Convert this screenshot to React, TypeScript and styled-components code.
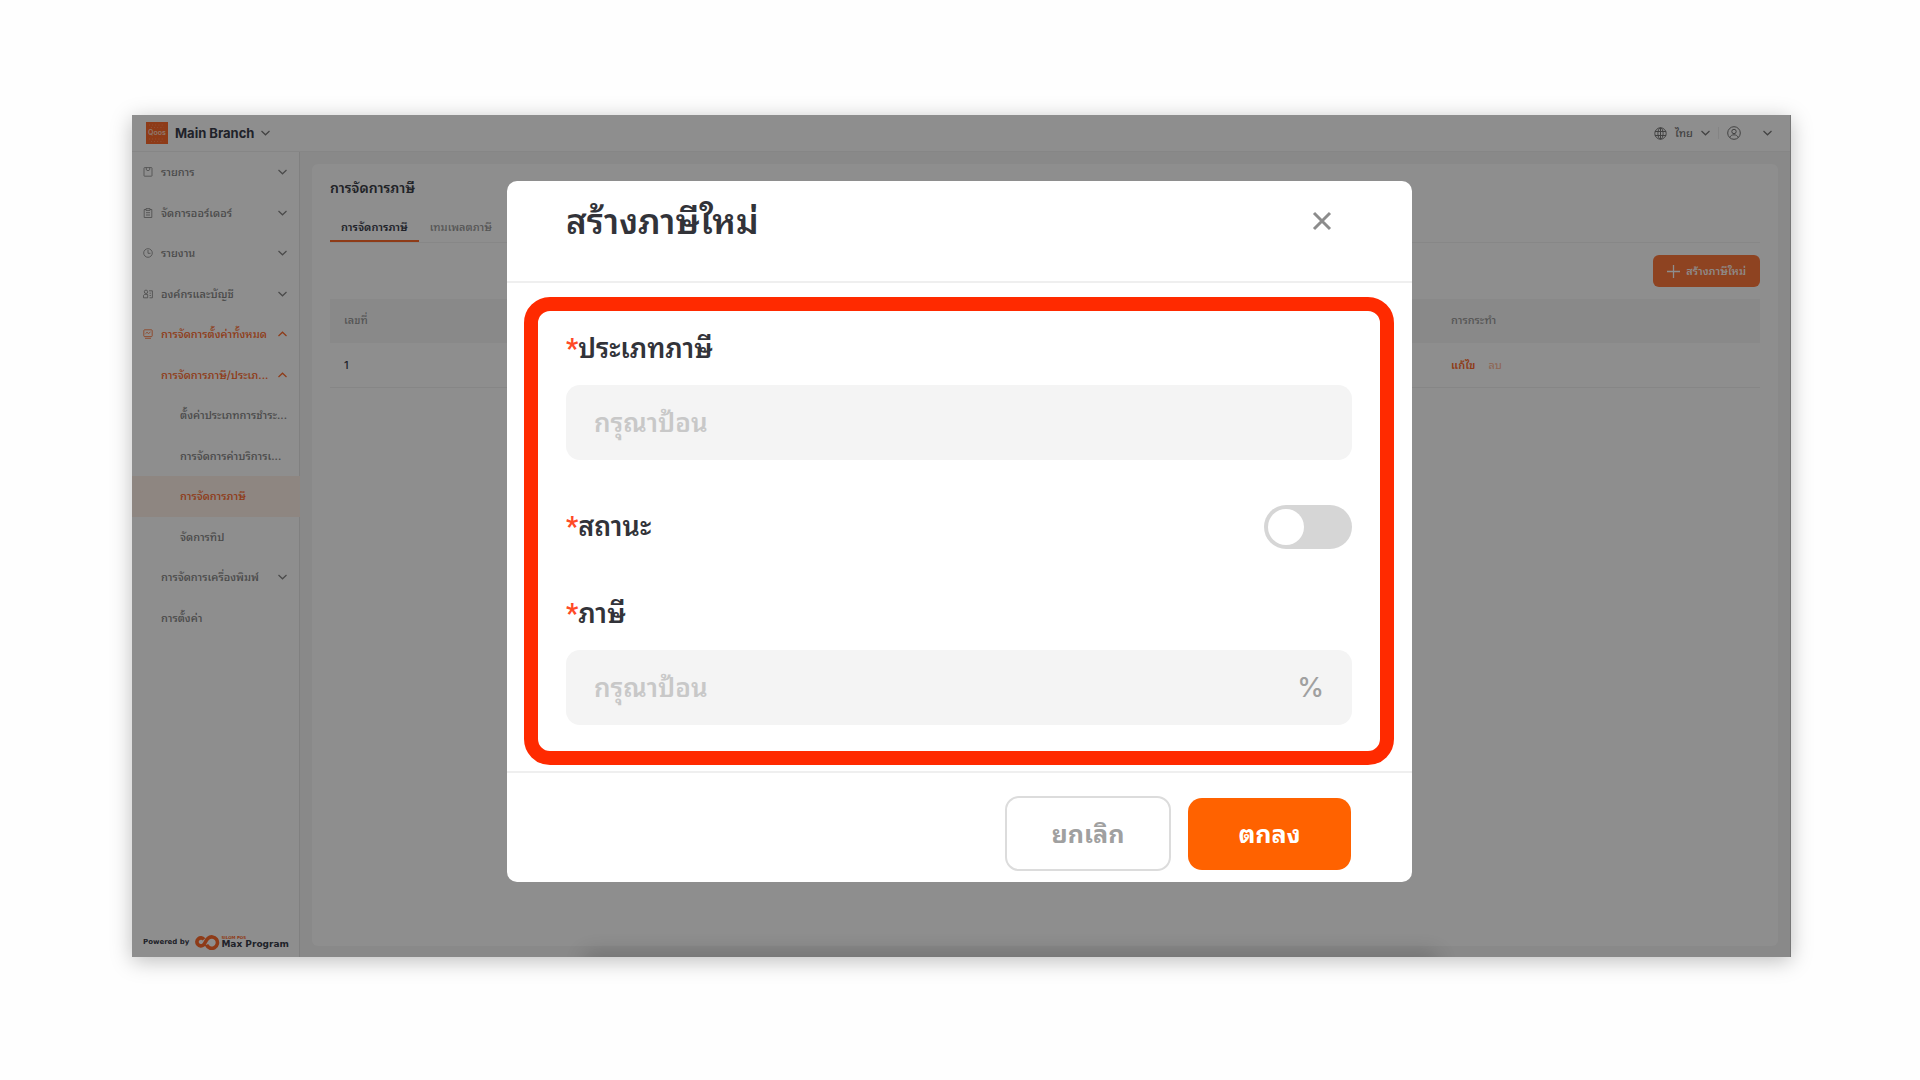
import React from "react";
import styled, { createGlobalStyle } from "styled-components";

const Global = createGlobalStyle`
  * { box-sizing: border-box; }
  body { margin: 0; background: #fefefe; font-family: Inter, "Noto Sans Thai Looped", Loma, Waree, Garuda, "Noto Sans Thai", "Noto Sans", sans-serif; color: #3a3d46; }
  button, input { font: inherit; color: inherit; }
  ul { list-style: none; margin: 0; padding: 0; }
  h1, h2 { margin: 0; }
`;

const Stage = styled.div`
  min-height: 100vh;
  display: grid;
  padding: 115px 129px 123px 132px;
`;
const Screen = styled.div`
  position: relative;
  display: flex;
  flex-direction: column;
  background: #f6f6f6;
  border-right: 1px solid #777;
  box-shadow: 0 4px 20px rgba(0, 0, 0, 0.26);
`;
const TopBar = styled.header`
  display: flex;
  align-items: center;
  justify-content: space-between;
  height: 37px;
  padding: 0 18px 0 14px;
  background: #fff;
  border-bottom: 1px solid #f0f0f0;
`;
const PlainButton = styled.button<{ $gap?: number }>`
  display: flex;
  align-items: center;
  gap: ${p => p.$gap ?? 8}px;
  padding: 0;
  border: 0;
  background: none;
  font-size: 11px;
  line-height: 16px;
  font-weight: 500;
  color: #777;
`;
const Branch = styled(PlainButton)`
  font-size: 13px;
  font-weight: 700;
  color: #3a3d4b;
  svg:last-child { color: #777; }
`;
const Account = styled.div`
  display: flex;
  align-items: center;
  gap: 8px;
`;
const Divider = styled.span`
  width: 1px;
  height: 12px;
  background: #eee;
`;
const Columns = styled.div`
  flex: 1;
  display: flex;
`;
const Sidebar = styled.nav`
  flex: none;
  width: 168px;
  display: flex;
  flex-direction: column;
  justify-content: space-between;
  background: #fff;
  border-right: 1px solid #e6e6e6;
`;
const Menu = styled.ul`
  display: grid;
  height: 486px;
  grid-auto-rows: 1fr;
`;
const MenuLink = styled.a<{ $level: number; $on?: boolean; $selected?: boolean }>`
  display: flex;
  align-items: center;
  height: 100%;
  padding: 0 13px 0 ${p => [11, 29, 48][p.$level]}px;
  font-size: 11px;
  line-height: 16px;
  font-weight: 500;
  color: ${p => (p.$on ? "#ff6b2c" : "#858585")};
  background: ${p => (p.$selected ? "#fff0e8" : "none")};
  text-decoration: none;
  white-space: nowrap;
  svg { flex: none; }
`;
const MenuIcon = styled.span`
  display: flex;
  width: 18px;
`;
const MenuText = styled.span`
  flex: 1;
  min-width: 0;
`;
const Powered = styled.footer`
  display: flex;
  align-items: center;
  gap: 5px;
  padding: 0 11px 7px;
  font-family: "DejaVu Sans", sans-serif;
  font-size: 7px;
  font-weight: 700;
  color: #3a3d4b;
  white-space: nowrap;
`;
const Brand = styled.span`
  display: flex;
  align-items: center;
`;
const BrandName = styled.span`
  display: flex;
  flex-direction: column;
  font-size: 9px;
  line-height: 9px;
  small { font-size: 4px; line-height: 4px; color: #ff6b2c; }
`;
const Card = styled.main`
  flex: 1;
  margin: 12px 12px 11px 12px;
  padding: 15px 18px;
  background: #fff;
  border-radius: 6px;
`;
const PageTitle = styled.h1`
  font-size: 14px;
  line-height: 18px;
  font-weight: 600;
`;
const Tabs = styled.div`
  display: flex;
  margin-top: 12px;
  border-bottom: 1px solid #f3f3f3;
`;
const Tab = styled.button<{ $on?: boolean }>`
  height: 33px;
  padding: 3px 11px 0;
  border: 0;
  border-bottom: 2px solid ${p => (p.$on ? "#ff6b2c" : "transparent")};
  background: none;
  font-size: 11px;
  font-weight: ${p => (p.$on ? 600 : 500)};
  color: ${p => (p.$on ? "#3a3d4b" : "#999")};
`;
const Actions = styled.div`
  display: flex;
  justify-content: flex-end;
  padding: 12px 0;
`;
const AddButton = styled.button`
  display: flex;
  align-items: center;
  gap: 6px;
  height: 32px;
  padding: 0 14px;
  border: 0;
  border-radius: 6px;
  background: #ff783c;
  color: #fff;
  font-size: 11px;
  line-height: 16px;
  font-weight: 500;
`;
const Table = styled.table`
  width: 100%;
  border-collapse: collapse;
  table-layout: fixed;
  font-size: 11px;
  line-height: 16px;
  th, td { height: 44px; padding: 0 14px; text-align: left; font-weight: 500; }
  th { padding-bottom: 2px; background: #f6f6f6; color: #999; }
  td { border-bottom: 1px solid #f0f0f0; color: #3a3d4b; }
  th:first-child { width: 1107px; }
`;
const RowLink = styled.a<{ $faded?: boolean }>`
  margin-right: 13px;
  color: ${p => (p.$faded ? "#ffb594" : "#ff6b2c")};
  font-weight: ${p => (p.$faded ? 400 : 600)};
  text-decoration: none;
`;
const Overlay = styled.div`
  position: absolute;
  inset: 0;
  display: flex;
  align-items: flex-start;
  justify-content: center;
  padding-top: 66px;
  overflow: hidden;
  background: rgba(0, 0, 0, 0.443);
  &::after {
    content: "";
    position: absolute;
    left: 455px;
    right: 355px;
    bottom: -10px;
    height: 10px;
    border-radius: 10px;
    box-shadow: 0 0 20px 4px rgba(0, 0, 0, 0.2);
  }
`;
const Dialog = styled.section`
  width: 905px;
  margin-right: 3px;
  background: #fff;
  border-radius: 10px;
  color: #323339;
`;
const DialogHead = styled.header`
  display: flex;
  align-items: flex-start;
  justify-content: space-between;
  height: 102px;
  padding: 16px 80px 0 59px;
  border-bottom: 2px solid #efefef;
  h2 { font-size: 35px; line-height: 48px; font-weight: 600; }
`;
const CloseButton = styled.button`
  display: flex;
  margin-top: 14px;
  padding: 0;
  border: 0;
  background: none;
  color: #8c8c8c;
`;
const Form = styled.form`
  margin: 14px 18px 6px 17px;
  padding: 18px 28px 26px;
  border: 14px solid #ff2a00;
  border-radius: 26px;
`;
const Label = styled.label`
  display: block;
  font-size: 27px;
  line-height: 40px;
  font-weight: 600;
`;
const Star = styled.span`
  font-family: Roboto, sans-serif;
  font-weight: 700;
  color: #ff4a26;
`;
const Field = styled.div`
  display: flex;
  align-items: center;
  height: 75px;
  margin-top: 16px;
  padding: 0 28px;
  border-radius: 14px;
  background: #f4f4f4;
  color: #a0a0a0;
  font-size: 27px;
  font-weight: 500;
`;
const TextInput = styled.input`
  flex: 1;
  min-width: 0;
  height: 60px;
  padding: 0;
  border: 0;
  outline: 0;
  background: none;
  font-size: 26px;
  font-weight: 600;
  &::placeholder { color: #c8c8c8; opacity: 1; }
`;
const SwitchRow = styled.div`
  display: flex;
  align-items: center;
  justify-content: space-between;
  margin: 45px 0;
`;
const Switch = styled.input`
  appearance: none;
  display: flex;
  align-items: center;
  width: 88px;
  height: 44px;
  margin: 0;
  padding: 0 4px;
  border-radius: 22px;
  background: #d6d6d6;
  &::before { content: ""; width: 36px; height: 36px; border-radius: 50%; background: #fff; }
  &:checked { justify-content: flex-end; background: #ff6200; }
`;
const DialogFoot = styled.footer`
  display: flex;
  align-items: center;
  justify-content: flex-end;
  gap: 17px;
  padding: 23px 61px 11px;
  border-top: 2px solid #efefef;
`;
const FootButton = styled.button<{ $primary?: boolean }>`
  width: ${p => (p.$primary ? 163 : 166)}px;
  height: ${p => (p.$primary ? 72 : 75)}px;
  padding: 0;
  border: ${p => (p.$primary ? "0" : "2px solid #dcdcdc")};
  border-radius: 14px;
  background: ${p => (p.$primary ? "#ff6200" : "#fff")};
  color: ${p => (p.$primary ? "#fff" : "#a0a0a0")};
  font-size: 25px;
  line-height: 36px;
  font-weight: 700;
`;

const Chevron = ({ up }: { up?: boolean }) => (
  <svg width="9" height="6" viewBox="0 0 9 6" fill="none" stroke="currentColor" strokeWidth="1.2">
    <path d={up ? "M.5 5 4.500 1.200 8.500 5" : "M.5 1 4.500 4.800 8.500 1"} />
  </svg>
);

const iconPaths: Record<string, React.ReactNode> = {
  box: <><rect x="1" y=".6" width="8" height="8.600" rx=".6" /><path d="M3.300 .6v2.200l1.700 1 1.700-1V.6" /></>,
  order: <><path d="M3 1.500H1.200v8h7.600v-8H7M3 .6h4v1.800H3zM3 4.700h4M3 7h4" /></>,
  clock: <><circle cx="5" cy="5" r="4.300" /><path d="M5 2v3.300h2.500" /></>,
  org: <><circle cx="3" cy="2.800" r="1.700" /><path d="M.5 8.800V7c0-1 .8-1.600 1.600-1.600h2.600v3.400zM6 1.800h3.400v7H6.500M6.500 4.200h1.400M6.500 6.500h1.400" /></>,
  board: <><rect x=".8" y=".8" width="8.400" height="6.800" rx=".8" /><path d="M2.500 4.700 4 3.300l1.500 1.200 2-1.500M2 9.300h6" /></>,
};
const Icon = ({ name }: { name: string }) => (
  <svg width="10" height="10" viewBox="0 0 10 10" fill="none" stroke="currentColor" strokeWidth=".8">
    {iconPaths[name]}
  </svg>
);

type Item = { text: string; level: number; icon?: string; on?: boolean; selected?: boolean; arrow?: "up" | "down" };
const items: Item[] = [
  { text: "รายการ", level: 0, icon: "box", arrow: "down" },
  { text: "จัดการออร์เดอร์", level: 0, icon: "order", arrow: "down" },
  { text: "รายงาน", level: 0, icon: "clock", arrow: "down" },
  { text: "องค์กรและบัญชี", level: 0, icon: "org", arrow: "down" },
  { text: "การจัดการตั้งค่าทั้งหมด", level: 0, icon: "board", on: true, arrow: "up" },
  { text: "การจัดการภาษี/ประเภ...", level: 1, on: true, arrow: "up" },
  { text: "ตั้งค่าประเภทการชำระ...", level: 2 },
  { text: "การจัดการค่าบริการเ...", level: 2 },
  { text: "การจัดการภาษี", level: 2, on: true, selected: true },
  { text: "จัดการทิป", level: 2 },
  { text: "การจัดการเครื่องพิมพ์", level: 1, arrow: "down" },
  { text: "การตั้งค่า", level: 1 },
];

const Logo = () => (
  <svg width="22" height="22" viewBox="0 0 22 22">
    <rect width="22" height="22" fill="#ff6b2c" />
    <text x="11" y="13" fontSize="7" fontWeight="600" textAnchor="middle" fill="#ffd8c5" fontFamily="Inter, sans-serif">Qoos</text>
    <path d="M3 3h16M5 5.500h13M3 17h16M5 19.500h13" stroke="#ffb594" strokeWidth=".7" strokeDasharray=".7 2.500" />
  </svg>
);

export default function App() {
  return (
    <Stage>
      <Global />
      <Screen>
        <TopBar>
          <Branch type="button" $gap={7}><Logo />Main Branch <Chevron /></Branch>
          <Account>
            <PlainButton type="button">
              <svg width="13" height="13" viewBox="0 0 13 13" fill="none" stroke="currentColor">
                <circle cx="6.500" cy="6.500" r="5.700" /><ellipse cx="6.500" cy="6.500" rx="2.600" ry="5.700" /><path d="M1 4.500h11M1 8.500h11M6.500 1v11" />
              </svg>
              ไทย <Chevron />
            </PlainButton>
            <Divider />
            <PlainButton type="button" aria-label="บัญชี" $gap={22}>
              <svg width="14" height="14" viewBox="0 0 14 14" fill="none" stroke="currentColor">
                <circle cx="7" cy="7" r="6.300" /><circle cx="7" cy="5.500" r="2.200" /><path d="M2.800 11.500c.8-2 2.300-2.700 4.200-2.700s3.400.7 4.200 2.700" />
              </svg>
              <Chevron />
            </PlainButton>
          </Account>
        </TopBar>
        <Columns>
          <Sidebar>
            <Menu>
              {items.map(i => (
                <li key={i.text}>
                  <MenuLink href="#" $level={i.level} $on={i.on} $selected={i.selected}>
                    {i.icon && <MenuIcon><Icon name={i.icon} /></MenuIcon>}
                    <MenuText>{i.text}</MenuText>
                    {i.arrow && <Chevron up={i.arrow === "up"} />}
                  </MenuLink>
                </li>
              ))}
            </Menu>
            <Powered>
              Powered by
              <Brand>
                <svg width="27" height="16" viewBox="0 0 27 16">
                  <g fill="none" stroke="#ff6b2c" strokeWidth="3.600">
                    <path d="M10 5.300a4 4 0 1 0-.5 5.600c2-2 2-4.500 4.500-6.600a5.700 5.700 0 1 1-1.500 6.500" />
                  </g>
                </svg>
                <BrandName><small>SILOM POS</small>Max Program</BrandName>
              </Brand>
            </Powered>
          </Sidebar>
          <Card>
            <PageTitle>การจัดการภาษี</PageTitle>
            <Tabs role="tablist">
              <Tab role="tab" $on>การจัดการภาษี</Tab>
              <Tab role="tab">เทมเพลตภาษี</Tab>
            </Tabs>
            <Actions>
              <AddButton type="button">
                <svg width="13" height="13" viewBox="0 0 13 13" stroke="currentColor" strokeWidth="1.300"><path d="M6.500 0v13M0 6.500h13" /></svg>
                สร้างภาษีใหม่
              </AddButton>
            </Actions>
            <Table>
              <thead><tr><th>เลขที่</th><th>การกระทำ</th></tr></thead>
              <tbody><tr><td>1</td><td><RowLink href="#">แก้ไข</RowLink><RowLink href="#" $faded>ลบ</RowLink></td></tr></tbody>
            </Table>
          </Card>
        </Columns>
        <Overlay>
          <Dialog role="dialog" aria-modal="true" aria-labelledby="dialog-title">
            <DialogHead>
              <h2 id="dialog-title">สร้างภาษีใหม่</h2>
              <CloseButton type="button" aria-label="ปิด">
                <svg width="20" height="20" viewBox="0 0 20 20" stroke="currentColor" strokeWidth="3"><path d="m2 2 16 16M18 2 2 18" /></svg>
              </CloseButton>
            </DialogHead>
            <Form>
              <Label htmlFor="tax-type"><Star>*</Star>ประเภทภาษี</Label>
              <Field><TextInput id="tax-type" placeholder="กรุณาป้อน" /></Field>
              <SwitchRow>
                <Label htmlFor="tax-status"><Star>*</Star>สถานะ</Label>
                <Switch id="tax-status" type="checkbox" role="switch" />
              </SwitchRow>
              <Label htmlFor="tax-rate"><Star>*</Star>ภาษี</Label>
              <Field><TextInput id="tax-rate" placeholder="กรุณาป้อน" />%</Field>
            </Form>
            <DialogFoot>
              <FootButton type="button">ยกเลิก</FootButton>
              <FootButton type="button" $primary>ตกลง</FootButton>
            </DialogFoot>
          </Dialog>
        </Overlay>
      </Screen>
    </Stage>
  );
}
